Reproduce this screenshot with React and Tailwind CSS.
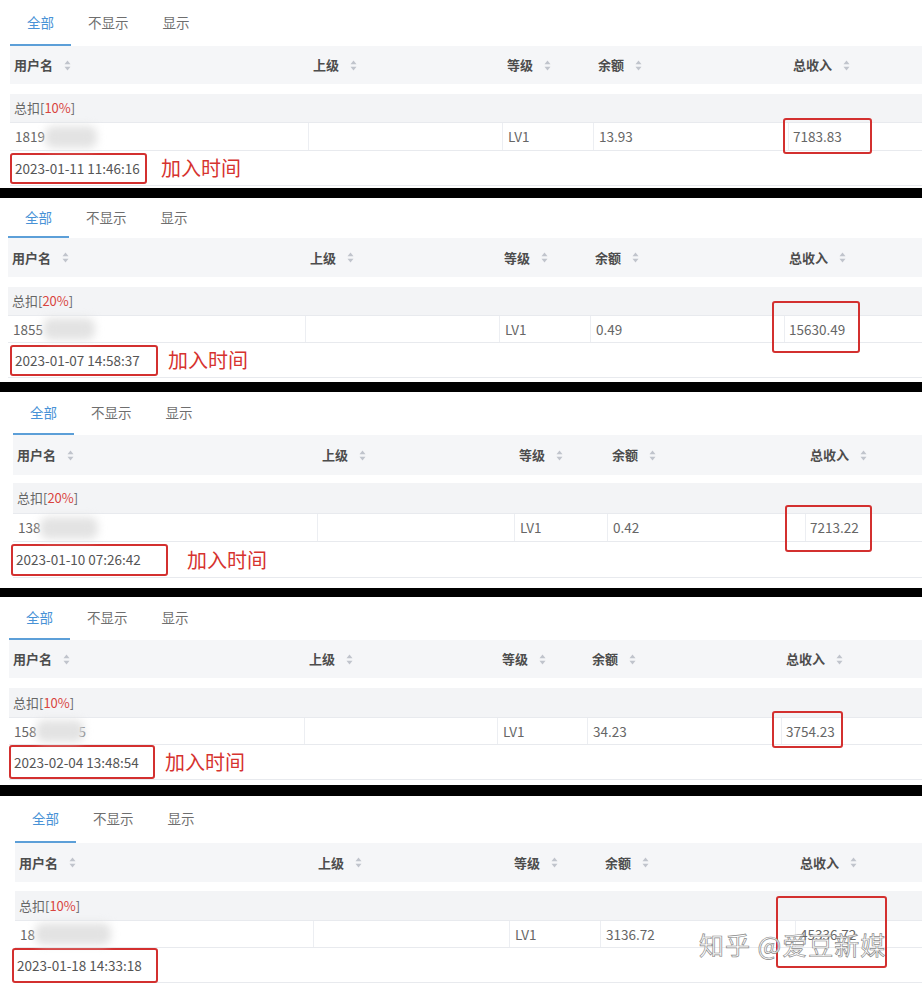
import React from "react";

const panels = [
  {
    pad: "pl-[10px]",
    tabsH: "h-[46px]",
    headerH: "h-[38px]",
    gapH: "h-[10px]",
    grayH: "h-[28px]",
    dataH: "h-[29px]",
    dateH: "h-[35px]",
    tailH: "h-[2px]",
    cols: ["w-[299px]", "w-[194px]", "w-[91px]", "w-[195px]"],
    pct: "10%",
    name: ["1819", "w-[52px]", ""],
    balance: "13.93",
    income: "7183.83",
    date: "2023-01-11 11:46:16",
    dateBox: "w-[137px] h-[31px]",
    label: "ml-[14px]",
    box: "left-[783px] top-[118px] w-[89px] h-[36px]",
    bar: "h-[10px]",
  },
  {
    pad: "pl-[8px]",
    tabsH: "h-[40px]",
    headerH: "h-[39px]",
    gapH: "h-[10px]",
    grayH: "h-[28px]",
    dataH: "h-[28px]",
    dateH: "h-[35px]",
    tailH: "h-[4px]",
    cols: ["w-[298px]", "w-[194px]", "w-[91px]", "w-[194px]"],
    pct: "20%",
    name: ["1855", "w-[52px]", ""],
    balance: "0.49",
    income: "15630.49",
    date: "2023-01-07 14:58:37",
    dateBox: "ml-[2px] w-[148px] h-[31px]",
    label: "ml-[10px]",
    box: "left-[772px] top-[103px] w-[88px] h-[52px]",
    bar: "h-[10px]",
  },
  {
    pad: "pl-[13px]",
    tabsH: "h-[43px]",
    headerH: "h-[40px]",
    gapH: "h-[8px]",
    grayH: "h-[30px]",
    dataH: "h-[29px]",
    dateH: "h-[36px]",
    tailH: "h-[10px]",
    cols: ["w-[305px]", "w-[197px]", "w-[93px]", "w-[198px]"],
    pct: "20%",
    name: ["138", "w-[58px]", ""],
    balance: "0.42",
    income: "7213.22",
    date: "2023-01-10 07:26:42",
    dateBox: "-ml-[2px] w-[157px] h-[32px]",
    label: "ml-[19px]",
    box: "left-[785px] top-[113px] w-[87px] h-[47px]",
    bar: "h-[9px]",
  },
  {
    pad: "pl-[9px]",
    tabsH: "h-[43px]",
    headerH: "h-[38px]",
    gapH: "h-[10px]",
    grayH: "h-[29px]",
    dataH: "h-[28px]",
    dateH: "h-[35px]",
    tailH: "h-[5px]",
    cols: ["w-[296px]", "w-[193px]", "w-[90px]", "w-[194px]"],
    pct: "10%",
    name: ["158", "w-[48px]", "5"],
    balance: "34.23",
    income: "3754.23",
    date: "2023-02-04 13:48:54",
    dateBox: "w-[146px] h-[34px]",
    label: "ml-[10px]",
    box: "left-[772px] top-[114px] w-[71px] h-[37px]",
    bar: "h-[11px]",
  },
  {
    pad: "pl-[15px]",
    tabsH: "h-[47px]",
    headerH: "h-[39px]",
    gapH: "h-[9px]",
    grayH: "h-[29px]",
    dataH: "h-[28px]",
    dateH: "h-[35px]",
    tailH: "h-[3px]",
    cols: ["w-[299px]", "w-[196px]", "w-[91px]", "w-[195px]"],
    pct: "10%",
    name: ["18", "w-[76px]", ""],
    balance: "3136.72",
    income: "45336.72",
    date: "2023-01-18 14:33:18",
    dateBox: "-ml-[3px] w-[146px] h-[35px]",
    label: null,
    box: "left-[776px] top-[100px] w-[111px] h-[72px]",
    bar: null,
    watermark: true,
  },
];

function SortIcon() {
  return (
    <svg width="7" height="11" viewBox="0 0 7 11" className="ml-[11px] shrink-0">
      <path d="M3.5 0.5 L6.5 4.2 L0.5 4.2 Z" fill="#c0c4cc" />
      <path d="M3.5 10.5 L6.5 6.8 L0.5 6.8 Z" fill="#c0c4cc" />
    </svg>
  );
}

function Panel({ p }) {
  const headers = ["用户名", "上级", "等级", "余额", "总收入"];
  return (
    <div className={`relative bg-white ${p.pad}`}>
      <div className={`flex items-stretch ${p.tabsH} text-[13.5px]`}>
        <div className="flex items-center px-[17px] border-b-2 border-[#5c9fd8] text-[#4892d6]">全部</div>
        <div className="flex items-center px-[17px] text-[#6e6e6e] pb-[2px]">不显示</div>
        <div className="flex items-center px-[17px] text-[#6e6e6e] pb-[2px]">显示</div>
      </div>
      <div className={`flex ${p.headerH} bg-[#f5f6f8] text-[13px] font-bold text-[#4d4d4d]`}>
        {headers.map((h, i) => (
          <div key={h} className={`flex items-center pl-[4px] ${i < 4 ? p.cols[i] : "flex-1"}`}>
            <span>{h}</span>
            <SortIcon />
          </div>
        ))}
      </div>
      <div className={p.gapH} />
      <div className={`flex items-center ${p.grayH} bg-[#f3f4f6] pl-[4px] text-[13px] text-[#666]`}>
        总扣[<span className="text-[#d9443f]">{p.pct}</span>]
      </div>
      <div className={`flex ${p.dataH} border-t border-b border-[#e8eaee] text-[13.5px] text-[#666]`}>
        <div className={`flex items-center pl-[5px] border-r border-[#eceef2] ${p.cols[0]}`}>
          <span>{p.name[0]}</span>
          <span className={`inline-block h-[22px] ${p.name[1]} rounded-[8px] bg-[#e3e3e3] blur-[4px]`} />
          {p.name[2] && <span className="-ml-[6px]">{p.name[2]}</span>}
        </div>
        <div className={`border-r border-[#eceef2] ${p.cols[1]}`} />
        <div className={`flex items-center pl-[5px] border-r border-[#eceef2] ${p.cols[2]}`}>LV1</div>
        <div className={`flex items-center pl-[5px] border-r border-[#eceef2] ${p.cols[3]}`}>{p.balance}</div>
        <div className="flex items-center pl-[4px] flex-1">{p.income}</div>
      </div>
      <div className={`flex items-center ${p.dateH} border-b border-[#e8eaee]`}>
        <div className={`flex items-center pl-[3px] border-[2.5px] border-[#d3302f] rounded-[3px] text-[13.5px] text-[#555] whitespace-nowrap ${p.dateBox}`}>
          {p.date}
        </div>
        {p.label && (
          <span className={`text-[20px] leading-none text-[#d6332f] ${p.label}`}>加入时间</span>
        )}
      </div>
      <div className={p.tailH} />
      <div className={`absolute border-[2.5px] border-[#d3302f] rounded-[3px] ${p.box}`} />
      {p.watermark && (
        <div className="absolute left-[699px] top-[136px] text-[25px] leading-none text-white tracking-[1px] [-webkit-text-stroke:0.7px_#8a8a8a] whitespace-nowrap">
          知乎 @爱豆新媒
        </div>
      )}
    </div>
  );
}

export default function App() {
  return (
    <div className="w-[922px] h-[986px] overflow-hidden bg-white font-['Microsoft_YaHei','Noto_Sans_CJK_SC',sans-serif]">
      {panels.map((p, i) => (
        <React.Fragment key={i}>
          <Panel p={p} />
          {p.bar && <div className={`${p.bar} bg-black`} />}
        </React.Fragment>
      ))}
    </div>
  );
}
